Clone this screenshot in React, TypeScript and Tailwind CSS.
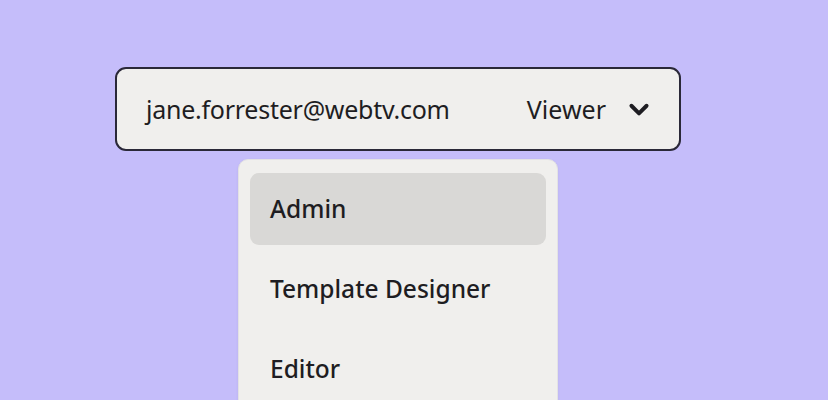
import React from "react";

export default function App() {
  const items = ["Admin", "Template Designer", "Editor"];
  return (
    <div
      className="w-[828px] h-[400px] overflow-hidden bg-[#c5bdfa] pt-[67px] pl-[115px]"
      style={{ fontFamily: '"Noto Sans", "Liberation Sans", sans-serif' }}
    >
      <div className="relative w-[566px]">
        <div className="h-[84px] w-[566px] rounded-[11px] border-2 border-[#2a2838] bg-[#f0efed] flex items-center pl-[29px] pr-[27px] text-[#1e1d22]">
          <span className="text-[25px] leading-none tracking-[-0.25px]">jane.forrester@webtv.com</span>
          <span className="ml-auto text-[25px] leading-none">Viewer</span>
          <svg className="ml-[20px]" width="26" height="26" viewBox="0 0 24 24" fill="none">
            <path d="M5 9l7 7 7-7" stroke="#1e1d22" strokeWidth="3.6" strokeLinecap="round" strokeLinejoin="round" />
          </svg>
        </div>
        <div className="absolute left-[123px] top-[92px] w-[320px] h-[260px] rounded-[10px] border border-[#e3e2e4] bg-[#f0efed] px-[11px] pt-[13px] flex flex-col gap-[8px] shadow-[0_1px_3px_rgba(0,0,0,0.06)]">
          {items.map((it, i) => (
            <div
              key={it}
              className={`h-[72px] rounded-[9px] flex items-center pl-[20px] text-[24.5px] font-medium text-[#1e1d22] ${i === 0 ? "bg-[#d9d8d6]" : ""}`}
            >
              {it}
            </div>
          ))}
        </div>
      </div>
    </div>
  );
}
